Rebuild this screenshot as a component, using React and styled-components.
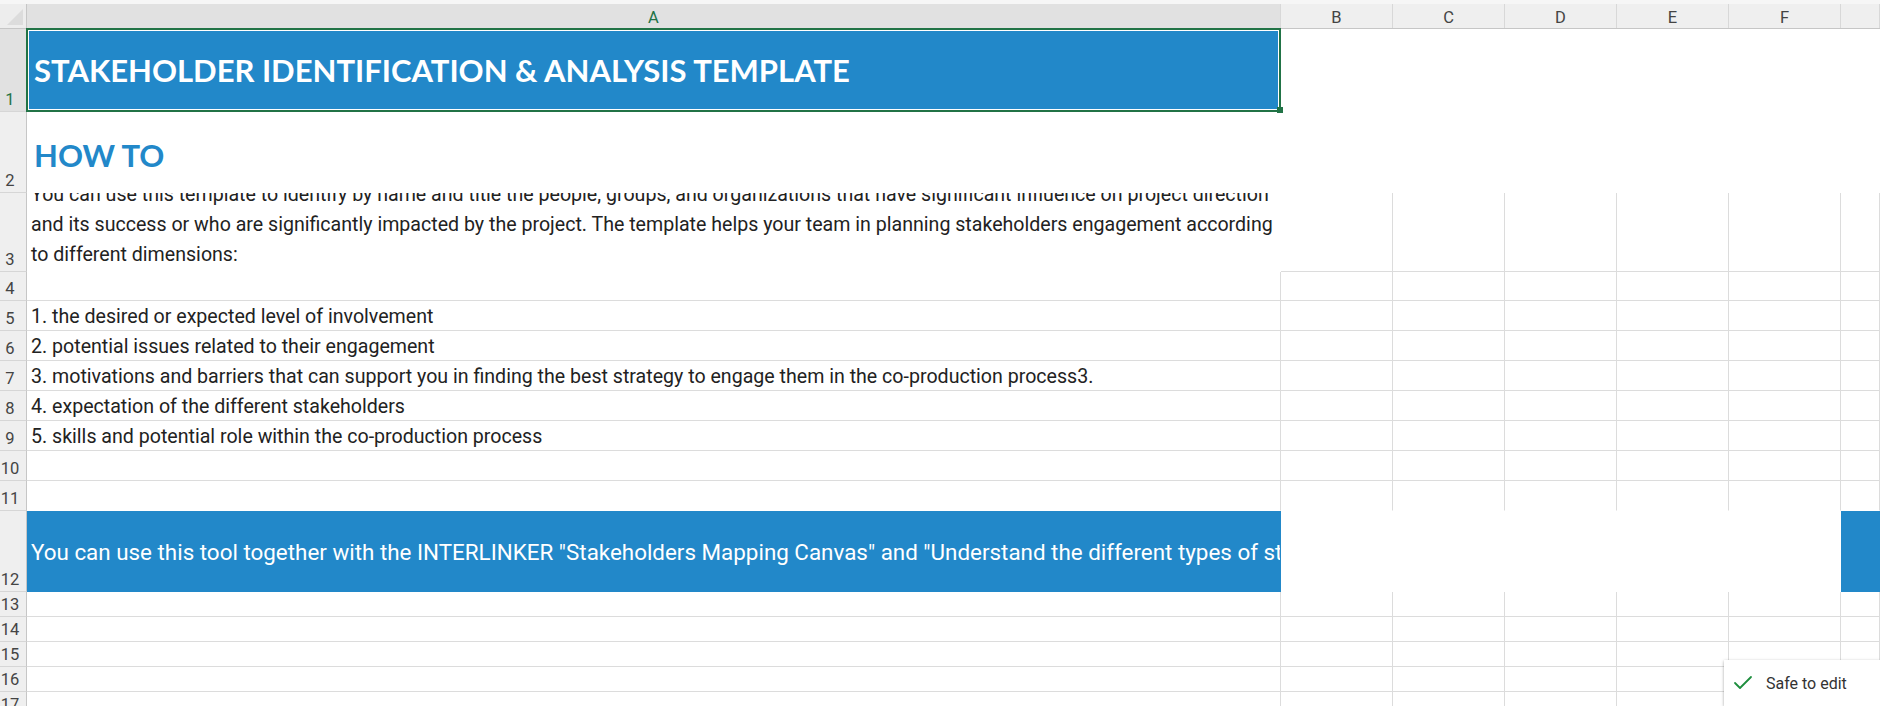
import React from 'react';
import styled, { createGlobalStyle } from 'styled-components';
import { Check } from 'lucide-react';

const BLUE = '#2288c9';
const GRID = '#dcdcdc';
const HEAD_LINE = '#c6c6c6';
const TRACK = '27px 1254px repeat(5, 112px) 1fr';

const GlobalStyle = createGlobalStyle`
  html, body {
    margin: 0;
    padding: 0;
    background: #fff;
    overflow: hidden;
  }
  body {
    font-family: Roboto, "Noto Sans", sans-serif;
  }
`;

const Window = styled.div`
  position: relative;
  width: 1880px;
  height: 706px;
  overflow: hidden;
  background: #fff;
`;

const TopStrip = styled.div`
  height: 4px;
  background: #f6f6f6;
`;

const HeaderRow = styled.div`
  display: grid;
  grid-template-columns: ${TRACK};
  height: 25px;
  box-sizing: border-box;
  background: #efefef;
  border-bottom: 1px solid ${HEAD_LINE};
`;

const Corner = styled.div`
  position: relative;
  border-right: 1px solid ${HEAD_LINE};
  background: #ededed;

  &::after {
    content: '';
    position: absolute;
    right: 3px;
    bottom: 3px;
    width: 16px;
    height: 16px;
    background: #dcdcdc;
    clip-path: polygon(100% 0, 100% 100%, 0 100%);
  }
`;

const ColHead = styled.div`
  display: flex;
  align-items: center;
  justify-content: center;
  padding-top: 2px;
  box-sizing: border-box;
  border-right: 1px solid #d8d8d8;
  background: ${(p) => (p.$active ? '#e1e1e1' : 'transparent')};
  color: ${(p) => (p.$active ? '#217346' : '#444')};
  font-size: 16.5px;
`;

const Row = styled.div`
  display: grid;
  grid-template-columns: ${TRACK};
  height: ${(p) => p.$h}px;
`;

const RowHead = styled.div`
  display: flex;
  align-items: flex-end;
  justify-content: center;
  box-sizing: border-box;
  padding: 0 6px 1px 0;
  background: ${(p) => (p.$active ? '#e1e1e1' : '#efefef')};
  border-right: 1px solid ${HEAD_LINE};
  border-bottom: 1px solid #d6d6d6;
  color: ${(p) => (p.$active ? '#217346' : '#444')};
  font-size: 16.5px;
  line-height: 20px;
`;

const Cell = styled.div`
  position: relative;
  display: flex;
  flex-direction: column;
  justify-content: ${(p) => (p.$v === 'center' ? 'center' : 'flex-end')};
  min-width: 0;
  box-sizing: border-box;
  overflow: ${(p) => (p.$selected ? 'visible' : 'hidden')};
  background: ${(p) => p.$fill || 'transparent'};
  border-right: 1px solid ${(p) => (p.$r ? GRID : 'transparent')};
  border-bottom: 1px solid ${(p) => (p.$b ? GRID : 'transparent')};
  padding-left: ${(p) => p.$pad ?? 4}px;
  padding-bottom: 1px;

  ${(p) =>
    p.$selected &&
    `
    &::after {
      content: '';
      position: absolute;
      inset: -1px;
      border: 2px solid #217346;
      box-shadow: inset 0 0 0 1px #fff;
      z-index: 2;
      pointer-events: none;
    }
    &::before {
      content: '';
      position: absolute;
      right: -3px;
      bottom: -2px;
      width: 6px;
      height: 6px;
      background: #217346;
      z-index: 3;
    }
  `}
`;

const Title = styled.div`
  font-family: Lato, "Open Sans", sans-serif;
  font-weight: 700;
  font-size: 31px;
  line-height: 36px;
  color: #fff;
  white-space: nowrap;
`;

const HowTo = styled(Title)`
  color: ${BLUE};
  padding-top: 6px;
`;

const Body = styled.div`
  font-size: 19.6px;
  line-height: 24px;
  color: #222;
  white-space: nowrap;
`;

const ParaLine = styled(Body)`
  line-height: 30px;
`;

const Banner = styled.div`
  font-size: 22.4px;
  line-height: 28px;
  color: #fff;
  white-space: nowrap;
  padding-top: 2px;
`;

const Toast = styled.div`
  position: absolute;
  right: 0;
  bottom: 0;
  width: 156px;
  height: 46px;
  display: flex;
  align-items: center;
  gap: 11px;
  padding-left: 7px;
  box-sizing: border-box;
  background: #fff;
  box-shadow: 0 1px 3px rgba(0, 0, 0, 0.35);
  color: #333;
  font-size: 16px;
`;

const COLS = ['A', 'B', 'C', 'D', 'E', 'F', ''];
const W = '#fff';
const B = BLUE;
const NONE = [null, null, null, null, null, null, null];

const paragraph = [
  'You can use this template to identify by name and title the people, groups, and organizations that have significant influence on project direction',
  'and its success or who are significantly impacted by the project. The template helps your team in planning stakeholders engagement according',
  'to different dimensions:',
];

const rows = [
  { n: 1, h: 83, fills: [B, W, W, W, W, W, W], v: 'center', pad: 7, content: <Title>STAKEHOLDER IDENTIFICATION &amp; ANALYSIS TEMPLATE</Title> },
  { n: 2, h: 81, fills: [W, W, W, W, W, W, W], v: 'center', pad: 7, content: <HowTo>HOW TO</HowTo> },
  { n: 3, h: 79, fills: [W, null, null, null, null, null, null], content: paragraph.map((l) => <ParaLine key={l}>{l}</ParaLine>) },
  { n: 4, h: 29 },
  { n: 5, h: 30, content: <Body>1. the desired or expected level of involvement</Body> },
  { n: 6, h: 30, content: <Body>2. potential issues related to their engagement</Body> },
  { n: 7, h: 30, content: <Body>3. motivations and barriers that can support you in finding the best strategy to engage them in the co-production process3.</Body> },
  { n: 8, h: 30, content: <Body>4. expectation of the different stakeholders</Body> },
  { n: 9, h: 30, content: <Body>5. skills and potential role within the co-production process</Body> },
  { n: 10, h: 30 },
  { n: 11, h: 30 },
  {
    n: 12, h: 81, fills: [B, W, W, W, W, W, B], v: 'center',
    content: <Banner>You can use this tool together with the INTERLINKER "Stakeholders Mapping Canvas" and "Understand the different types of stakeholders" to get a complete picture</Banner>,
  },
  { n: 13, h: 25 },
  { n: 14, h: 25 },
  { n: 15, h: 25 },
  { n: 16, h: 25 },
  { n: 17, h: 25 },
];

export default function App() {
  return (
    <Window>
      <GlobalStyle />
      <TopStrip />
      <HeaderRow>
        <Corner />
        {COLS.map((c, i) => (
          <ColHead key={i} $active={c === 'A'}>{c}</ColHead>
        ))}
      </HeaderRow>
      {rows.map((row, ri) => {
        const fills = row.fills || NONE;
        const next = (rows[ri + 1] && rows[ri + 1].fills) || NONE;
        return (
          <Row key={row.n} $h={row.h}>
            <RowHead $active={row.n === 1}>{row.n}</RowHead>
            {fills.map((f, ci) => (
              <Cell
                key={ci}
                $fill={f}
                $r={!f && !fills[ci + 1]}
                $b={!f && !next[ci]}
                $v={row.v}
                $pad={row.pad}
                $selected={row.n === 1 && ci === 0}
              >
                {ci === 0 ? row.content : null}
              </Cell>
            ))}
          </Row>
        );
      })}
      <Toast>
        <Check size={24} color="#1e8e3e" strokeWidth={1.8} />
        Safe to edit
      </Toast>
    </Window>
  );
}
